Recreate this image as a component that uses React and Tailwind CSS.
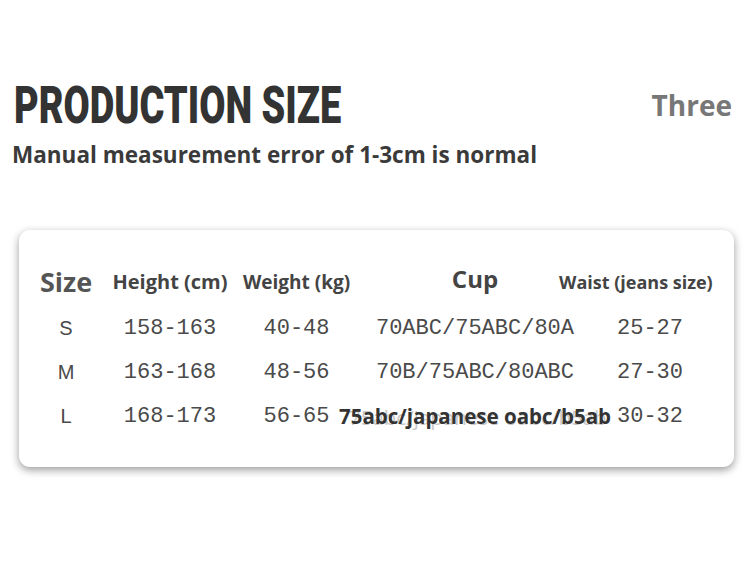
import React from 'react'

const rows = [
  { size: 'S', height: '158-163', weight: '40-48', cup: '70ABC/75ABC/80A', waist: '25-27' },
  { size: 'M', height: '163-168', weight: '48-56', cup: '70B/75ABC/80ABC', waist: '27-30' },
  { size: 'L', height: '168-173', weight: '56-65', cup: null, waist: '30-32' },
]

export default function App() {
  return (
    <div className="w-[750px] h-[570px] bg-white overflow-hidden font-['Open_Sans','Noto_Sans',sans-serif]">
      {/* heading */}
      <div className="flex justify-between items-start pt-[74px] pl-[14px] pr-[18px]">
        <div className="origin-left scale-x-[0.73] text-[52px] leading-[64px] font-black text-[#333] font-['Roboto','Open_Sans',sans-serif] whitespace-nowrap">
          PRODUCTION SIZE
        </div>
        <div className="mt-[10px] text-[28px] font-bold text-[#777]">Three</div>
      </div>
      <div className="pl-[12px] mt-[2px] text-[22.5px] leading-[30px] font-bold text-[#3a3a3a] whitespace-nowrap">
        Manual measurement error of 1-3cm is normal
      </div>

      {/* size table */}
      <div className="ml-[19px] mt-[60px] w-[715px] h-[237px] rounded-[11px] bg-white shadow-[0_3px_9px_rgba(0,0,0,0.4)] pt-[32px]">
        <div className="grid grid-cols-[94px_114px_139px_218px_1fr] items-center h-[30px] font-bold text-[#444] whitespace-nowrap">
          <div className="flex justify-center text-[27px] text-[#555]">Size</div>
          <div className="flex justify-center text-[20px]">Height (cm)</div>
          <div className="flex justify-center text-[19px]">Weight (kg)</div>
          <div className="flex justify-center text-[24px] -mt-[6px]">Cup</div>
          <div className="-ml-[25px] text-[18px]">Waist (jeans size)</div>
        </div>
        <div className="mt-[14px] font-['Liberation_Mono','DejaVu_Sans_Mono',monospace] text-[22px] text-[#4a4a4a] whitespace-nowrap">
          {rows.map((r) => (
            <div key={r.size} className="grid grid-cols-[94px_114px_139px_218px_1fr] items-center h-[44px]">
              <div className="flex justify-center font-['Liberation_Sans',sans-serif] font-light text-[20px]">{r.size}</div>
              <div className="flex justify-center">{r.height}</div>
              <div className="flex justify-center">{r.weight}</div>
              <div className="flex justify-center">
                {r.cup ? (
                  r.cup
                ) : (
                  <span className="relative font-['Open_Sans','Noto_Sans',sans-serif] font-bold text-[20.5px] text-[#333]">
                    <span className="absolute left-[10px] top-[1px] text-[#c8c8c8] font-normal">75abc/japanese oabc/b5ab</span>
                    <span className="relative">75abc/japanese oabc/b5ab</span>
                  </span>
                )}
              </div>
              <div className="pl-[33px]">{r.waist}</div>
            </div>
          ))}
        </div>
      </div>
    </div>
  )
}
